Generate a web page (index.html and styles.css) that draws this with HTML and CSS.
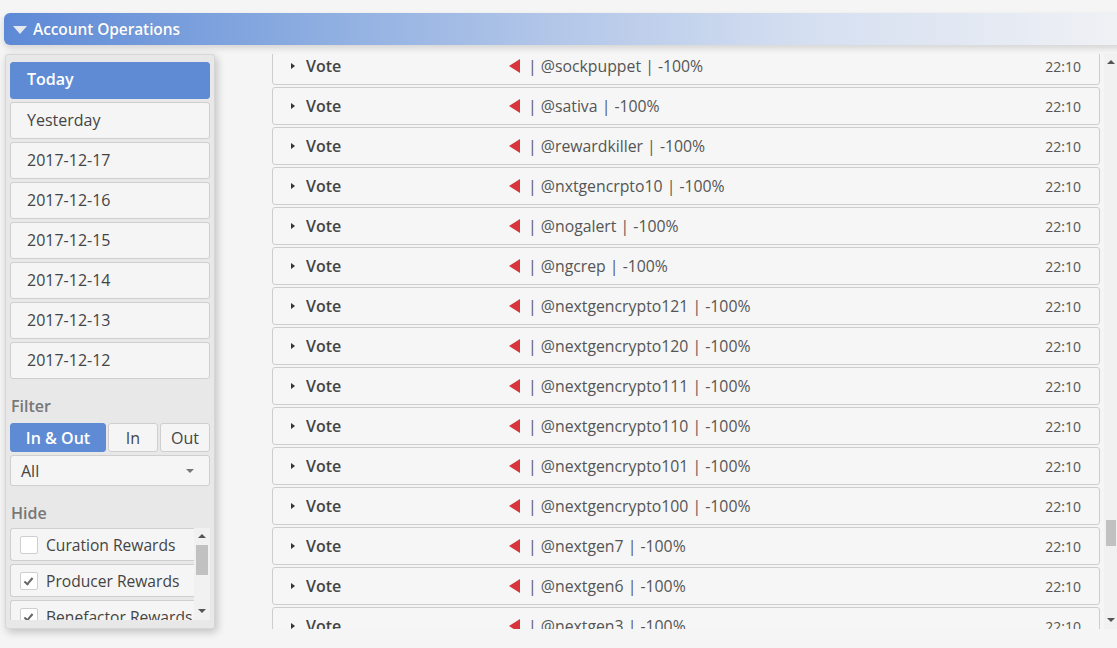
FILE: index.html
```html
<!DOCTYPE html>
<html lang="en">
<head>
    <meta charset="UTF-8">
    <title>Account Operations</title>
    <link rel="stylesheet" href="styles.css">
</head>
<body>
    <div class="section-bar">
        <span class="bar-caret"></span>
        <span class="bar-title">Account Operations</span>
    </div>

    <div class="ops">
        <div class="side-panel">
            <div class="day-btn active">Today</div>
            <div class="day-btn">Yesterday</div>
            <div class="day-btn">2017-12-17</div>
            <div class="day-btn">2017-12-16</div>
            <div class="day-btn">2017-12-15</div>
            <div class="day-btn">2017-12-14</div>
            <div class="day-btn">2017-12-13</div>
            <div class="day-btn">2017-12-12</div>

            <div class="side-label filter-label">Filter</div>
            <div class="seg">
                <div class="seg-btn active wide">In &amp; Out</div>
                <div class="seg-btn">In</div>
                <div class="seg-btn">Out</div>
            </div>
            <div class="select">
                <span>All</span>
                <span class="select-caret"></span>
            </div>

            <div class="side-label hide-label">Hide</div>
            <div class="hide-box">
                <div class="hide-items">
                    <div class="hide-item"><span class="chk"></span>Curation Rewards</div>
                    <div class="hide-item"><span class="chk on"></span>Producer Rewards</div>
                    <div class="hide-item"><span class="chk on"></span>Benefactor Rewards</div>
                </div>
                <div class="mini-scroll">
                    <span class="sb-up"></span>
                    <span class="mini-thumb"></span>
                    <span class="sb-fill"></span>
                    <span class="sb-down"></span>
                </div>
            </div>
        </div>

        <div class="feed-wrap">
            <div class="feed">
                <div class="feed-inner">
                    <div class="op"><span class="exp"></span><span class="op-name">Vote</span><span class="down"></span><span class="op-detail">| @sockpuppet | -100%</span><span class="op-time">22:10</span></div>
                    <div class="op"><span class="exp"></span><span class="op-name">Vote</span><span class="down"></span><span class="op-detail">| @sativa | -100%</span><span class="op-time">22:10</span></div>
                    <div class="op"><span class="exp"></span><span class="op-name">Vote</span><span class="down"></span><span class="op-detail">| @rewardkiller | -100%</span><span class="op-time">22:10</span></div>
                    <div class="op"><span class="exp"></span><span class="op-name">Vote</span><span class="down"></span><span class="op-detail">| @nxtgencrpto10 | -100%</span><span class="op-time">22:10</span></div>
                    <div class="op"><span class="exp"></span><span class="op-name">Vote</span><span class="down"></span><span class="op-detail">| @nogalert | -100%</span><span class="op-time">22:10</span></div>
                    <div class="op"><span class="exp"></span><span class="op-name">Vote</span><span class="down"></span><span class="op-detail">| @ngcrep | -100%</span><span class="op-time">22:10</span></div>
                    <div class="op"><span class="exp"></span><span class="op-name">Vote</span><span class="down"></span><span class="op-detail">| @nextgencrypto121 | -100%</span><span class="op-time">22:10</span></div>
                    <div class="op"><span class="exp"></span><span class="op-name">Vote</span><span class="down"></span><span class="op-detail">| @nextgencrypto120 | -100%</span><span class="op-time">22:10</span></div>
                    <div class="op"><span class="exp"></span><span class="op-name">Vote</span><span class="down"></span><span class="op-detail">| @nextgencrypto111 | -100%</span><span class="op-time">22:10</span></div>
                    <div class="op"><span class="exp"></span><span class="op-name">Vote</span><span class="down"></span><span class="op-detail">| @nextgencrypto110 | -100%</span><span class="op-time">22:10</span></div>
                    <div class="op"><span class="exp"></span><span class="op-name">Vote</span><span class="down"></span><span class="op-detail">| @nextgencrypto101 | -100%</span><span class="op-time">22:10</span></div>
                    <div class="op"><span class="exp"></span><span class="op-name">Vote</span><span class="down"></span><span class="op-detail">| @nextgencrypto100 | -100%</span><span class="op-time">22:10</span></div>
                    <div class="op"><span class="exp"></span><span class="op-name">Vote</span><span class="down"></span><span class="op-detail">| @nextgen7 | -100%</span><span class="op-time">22:10</span></div>
                    <div class="op"><span class="exp"></span><span class="op-name">Vote</span><span class="down"></span><span class="op-detail">| @nextgen6 | -100%</span><span class="op-time">22:10</span></div>
                    <div class="op"><span class="exp"></span><span class="op-name">Vote</span><span class="down"></span><span class="op-detail">| @nextgen3 | -100%</span><span class="op-time">22:10</span></div>
                </div>
            </div>
            <div class="vscroll">
                <span class="sb-up"></span>
                <span class="sb-gap"></span>
                <span class="vthumb"></span>
                <span class="sb-fill"></span>
                <span class="sb-down"></span>
            </div>
        </div>
    </div>
</body>
</html>
```

FILE: styles.css
```css
html, body {
    margin: 0;
    height: 100%;
    overflow: hidden;
}
body {
    font-family: 'Open Sans', 'Liberation Sans', sans-serif;
    background-color: #f5f5f5;
    color: #444;
    padding-top: 13px;
    box-sizing: border-box;
}

/* section header */
.section-bar {
    margin-left: 4px;
    margin-right: -20px;
    height: 32px;
    border-radius: 6px 0 0 6px;
    background: linear-gradient(to right, #5d89d6 0%, #8eaee1 28%, #b5c8e9 50%, #d6e0f1 72%, #f1f2f5 100%);
    box-shadow: 0 3px 6px rgba(0,0,0,0.14);
    display: flex;
    align-items: center;
    color: #fff;
}
.bar-caret {
    width: 0;
    height: 0;
    margin-left: 9px;
    margin-right: 6px;
    border-left: 7px solid transparent;
    border-right: 7px solid transparent;
    border-top: 8px solid #e4e8ef;
    margin-top: 2px;
}
.bar-title {
    font-size: 15.5px;
    font-weight: 600;
    letter-spacing: -0.1px;
    text-shadow: 0 0 1px rgba(0,0,0,0.15);
}

.ops {
    display: flex;
    margin-top: 9px;
    height: 575px;
}

/* left panel */
.side-panel {
    width: 200px;
    margin-left: 5px;
    padding: 7px 4px 0 4px;
    background-color: #e8e8e8;
    border: 1px solid #d6d6d6;
    border-radius: 3px;
    box-shadow: 2px 3px 8px rgba(0,0,0,0.22);
    display: flex;
    flex-direction: column;
}
.day-btn {
    height: 35px;
    line-height: 35px;
    padding-left: 16px;
    margin-bottom: 3px;
    background-color: #f5f5f5;
    border: 1px solid #cfcfcf;
    border-radius: 3px;
    font-size: 16px;
    color: #444;
}
.day-btn.active {
    background-color: #5f8bd5;
    border-color: #5f8bd5;
    color: #fff;
    font-weight: 600;
    line-height: 33px;
}
.side-label {
    font-size: 16px;
    font-weight: 600;
    color: #777;
    padding-left: 1px;
    line-height: 22px;
}
.filter-label {
    margin-top: 13px;
    margin-bottom: 6px;
}
.seg {
    display: flex;
    gap: 2px;
}
.seg-btn {
    flex: 1;
    height: 27px;
    line-height: 28px;
    text-align: center;
    background-color: #f5f5f5;
    border: 1px solid #cfcfcf;
    border-radius: 3px;
    font-size: 16px;
    color: #444;
}
.seg-btn.wide {
    flex: 0 0 94px;
}
.seg-btn.active {
    background-color: #5f8bd5;
    border-color: #5f8bd5;
    color: #fff;
    font-weight: 600;
}
.select {
    margin-top: 3px;
    height: 29px;
    display: flex;
    align-items: center;
    justify-content: space-between;
    padding: 0 15px 0 10px;
    background-color: #f5f5f5;
    border: 1px solid #cfcfcf;
    border-radius: 3px;
    font-size: 16px;
    color: #444;
}
.select-caret {
    width: 0;
    height: 0;
    border-left: 4px solid transparent;
    border-right: 4px solid transparent;
    border-top: 4px solid #777;
}
.hide-label {
    margin-top: 16px;
    margin-bottom: 4px;
}
.hide-box {
    display: flex;
    height: 92px;
    overflow: hidden;
}
.hide-items {
    flex: 1;
    overflow: hidden;
}
.hide-item {
    height: 31px;
    margin-bottom: 3px;
    display: flex;
    align-items: center;
    background-color: #f5f5f5;
    border: 1px solid #cfcfcf;
    border-right: none;
    border-radius: 3px 0 0 3px;
    font-size: 15.6px;
    color: #444;
    white-space: nowrap;
}
.chk {
    width: 16px;
    height: 16px;
    margin: 0 8px 0 9px;
    background-color: #fff;
    border: 1px solid #cfcfcf;
    border-radius: 2px;
    position: relative;
    flex: none;
}
.chk.on::after {
    content: "";
    position: absolute;
    left: 5px;
    top: 3px;
    width: 3px;
    height: 7px;
    border-right: 2px solid #666;
    border-bottom: 2px solid #666;
    transform: rotate(40deg);
}
.mini-scroll {
    width: 16px;
    background-color: #f1f1f1;
    display: flex;
    flex-direction: column;
    align-items: center;
}
.mini-thumb {
    width: 12px;
    height: 30px;
    background-color: #c1c1c1;
}

/* scrollbar parts */
.sb-up, .sb-down {
    width: 0;
    height: 0;
    border-left: 4px solid transparent;
    border-right: 4px solid transparent;
    flex: none;
}
.sb-up {
    border-bottom: 4px solid #555;
    margin: 6px 0 7px;
}
.sb-down {
    border-top: 4px solid #555;
    margin: 6px 0 7px;
}
.sb-fill {
    flex: 1;
}

/* operations list */
.feed-wrap {
    flex: 1;
    display: flex;
    margin-left: 57px;
}
.feed {
    flex: 1;
    overflow: hidden;
}
.feed-inner {
    margin-top: -7px;
}
.op {
    height: 36px;
    margin-bottom: 2px;
    display: flex;
    align-items: center;
    background-color: #f6f6f6;
    border: 1px solid #cdcdcd;
    border-radius: 3px;
    font-size: 16px;
    color: #555;
}
.exp {
    width: 0;
    height: 0;
    margin-left: 18px;
    margin-right: 11px;
    border-top: 3.5px solid transparent;
    border-bottom: 3.5px solid transparent;
    border-left: 4px solid #333;
}
.op-name {
    width: 203px;
    font-weight: 600;
    color: #444;
}
.down {
    width: 0;
    height: 0;
    border-top: 7.5px solid transparent;
    border-bottom: 7.5px solid transparent;
    border-right: 11px solid #d8343c;
    margin-right: 8px;
}
.op-detail {
    flex: 1;
    white-space: nowrap;
    font-size: 15.8px;
}
.op-time {
    font-size: 14px;
    color: #555;
    margin-right: 18px;
}
.vscroll {
    width: 13px;
    margin-left: 4px;
    background-color: #f1f1f1;
    display: flex;
    flex-direction: column;
    align-items: center;
}
.sb-gap {
    height: 449px;
    flex: none;
}
.vthumb {
    width: 10px;
    height: 26px;
    background-color: #c1c1c1;
    flex: none;
}
```
